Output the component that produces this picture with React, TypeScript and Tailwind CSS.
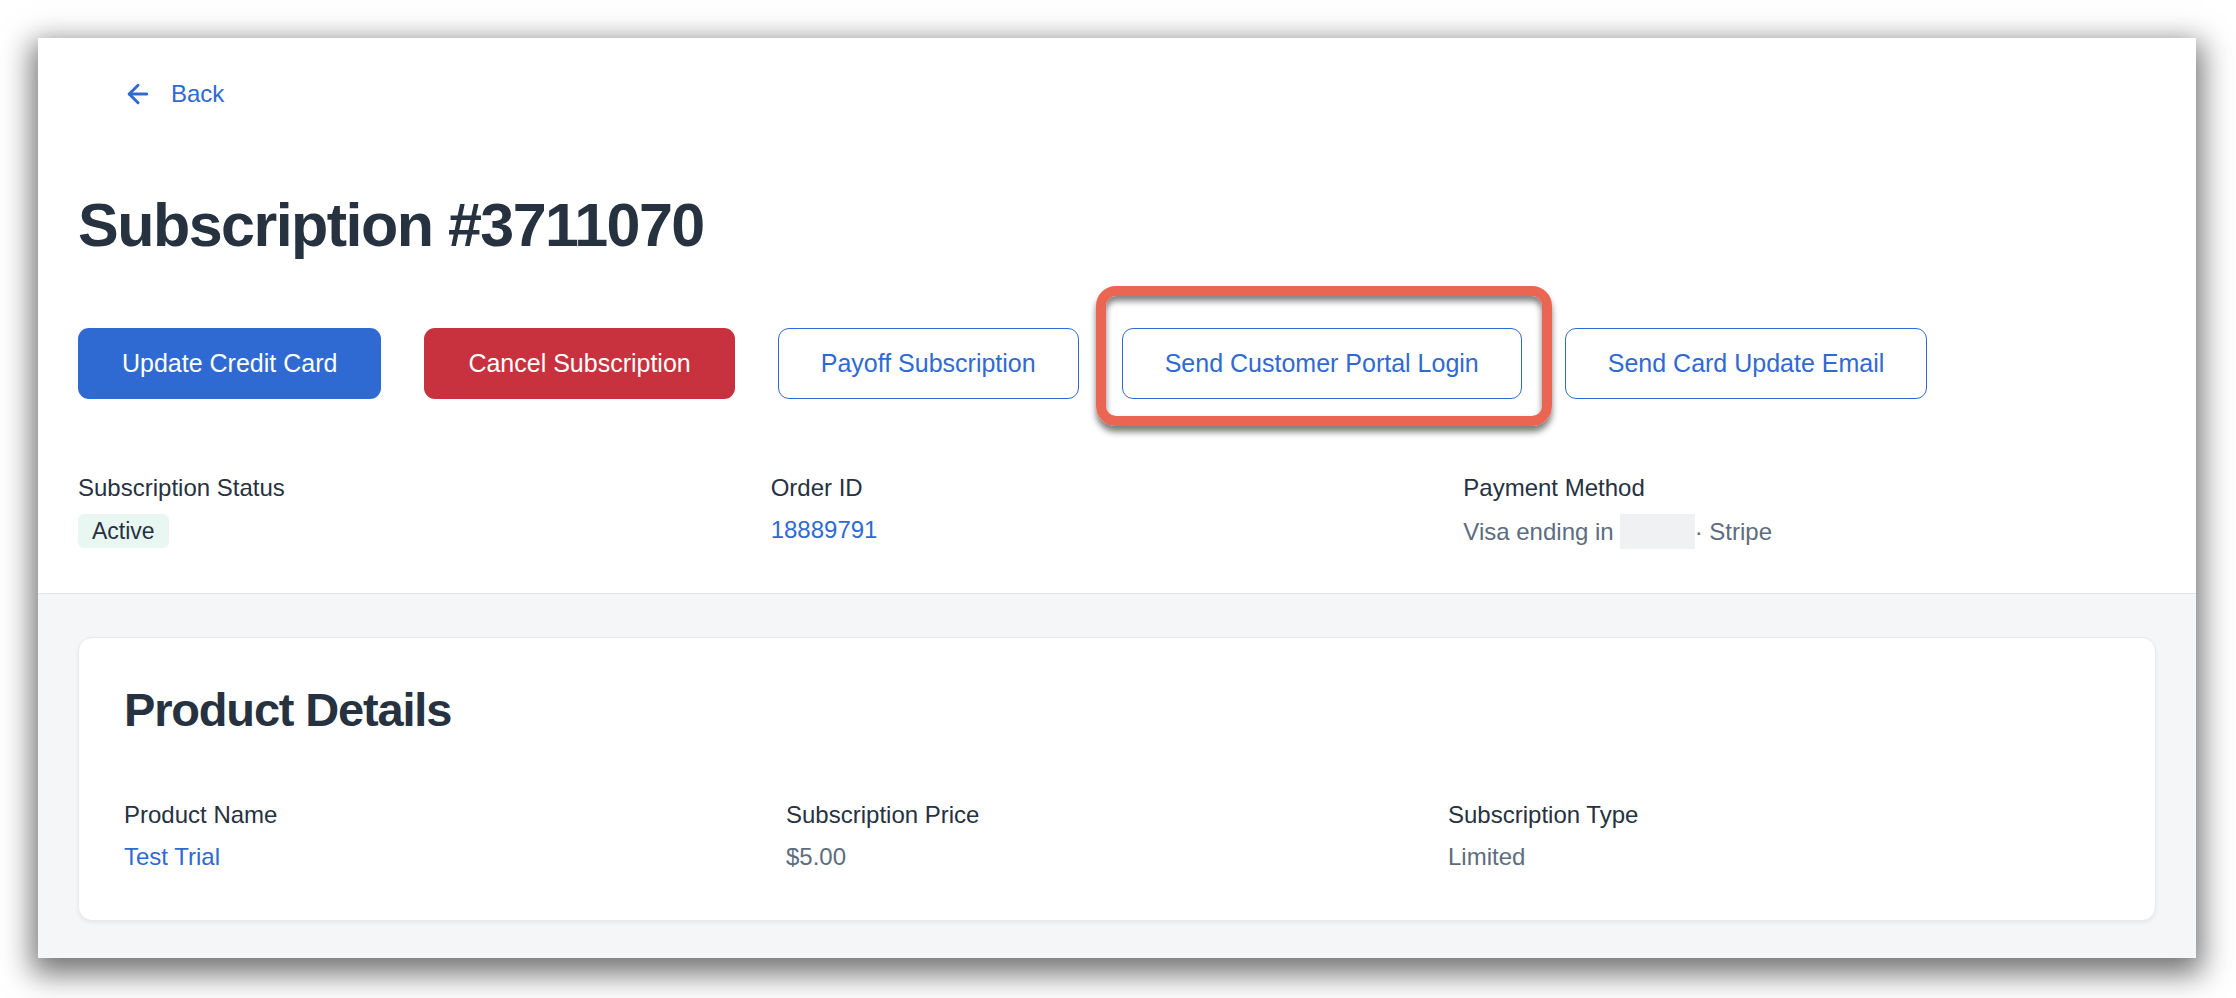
import { ArrowLeft } from "lucide-react";

const font = { fontFamily: '"Liberation Sans", Arial, sans-serif' };

function Field({ label, children }: { label: string; children: React.ReactNode }) {
	return (
		<div className="flex flex-col">
			<p className="text-[24px] leading-[32px] text-[#27313f]">{label}</p>
			<div className="mt-[10px] text-[24px] leading-[32px]">{children}</div>
		</div>
	);
}

export default function App() {
	return (
		<div className="w-[2236px] h-[998px] bg-white pl-[38px] pt-[38px]" style={font}>
			<div className="w-[2158px] h-[920px] bg-white flex flex-col shadow-[0_10px_28px_6px_rgba(0,0,0,0.55)]">
				<section className="px-[40px] pt-[40px] pb-[44px] border-b border-[#e2e5e9]">
					<a className="ml-[45px] flex items-center gap-[18px] text-[#2f6ad2] text-[24px] leading-[32px]">
						<ArrowLeft className="w-[30px] h-[30px]" strokeWidth={2.4} />
						<span>Back</span>
					</a>

					<h1 className="mt-[79px] text-[61px] leading-[72px] font-bold tracking-tight text-[#26323f]">
						Subscription #3711070
					</h1>

					<div className="mt-[67px] flex items-center gap-[43px]">
						<button className="h-[71px] px-[44px] rounded-[11px] bg-[#2f6ad2] text-white text-[25px]">
							Update Credit Card
						</button>
						<button className="h-[71px] px-[44px] rounded-[11px] bg-[#c8313e] text-white text-[25px]">
							Cancel Subscription
						</button>
						<button className="h-[71px] px-[42px] rounded-[11px] border border-[#2f6ad2] bg-white text-[#2f6ad2] text-[25px]">
							Payoff Subscription
						</button>
						<div className="relative">
							<button className="h-[71px] px-[42px] rounded-[11px] border border-[#2f6ad2] bg-white text-[#2f6ad2] text-[25px]">
								Send Customer Portal Login
							</button>
							<div className="absolute -left-[26px] -right-[30px] -top-[42px] -bottom-[27px] rounded-[20px] border-[10px] border-[#eb6553] shadow-[0_6px_6px_rgba(0,0,0,0.5),inset_0_5px_6px_rgba(0,0,0,0.5)] pointer-events-none" />
						</div>
						<button className="h-[71px] px-[42px] rounded-[11px] border border-[#2f6ad2] bg-white text-[#2f6ad2] text-[25px]">
							Send Card Update Email
						</button>
					</div>

					<div className="mt-[73px] grid grid-cols-3">
						<Field label="Subscription Status">
							<span className="inline-flex items-center h-[34px] px-[14px] rounded-[6px] bg-[#e9f7f2] text-[23px] text-[#27313f]">
								Active
							</span>
						</Field>
						<Field label="Order ID">
							<span className="text-[#2f6ad2]">18889791</span>
						</Field>
						<Field label="Payment Method">
							<span className="flex items-center text-[#5d6c7e]">
								Visa ending in
								<span className="ml-[6px] inline-block w-[75px] h-[35px] bg-[#f0f1f3]" />
								<span>·&nbsp;Stripe</span>
							</span>
						</Field>
					</div>
				</section>

				<section className="flex-1 bg-[#f5f6f8] px-[40px] pt-[43px]">
					<div className="bg-white rounded-[14px] border border-[#e8eaed] shadow-[0_2px_4px_rgba(0,0,0,0.06)] px-[45px] pt-[44px] pb-[47px]">
						<h2 className="text-[47px] leading-[56px] font-bold tracking-tight text-[#26323f]">
							Product Details
						</h2>
						<div className="mt-[61px] grid grid-cols-3">
							<Field label="Product Name">
								<span className="text-[#2f6ad2]">Test Trial</span>
							</Field>
							<Field label="Subscription Price">
								<span className="text-[#5d6c7e]">$5.00</span>
							</Field>
							<Field label="Subscription Type">
								<span className="text-[#5d6c7e]">Limited</span>
							</Field>
						</div>
					</div>
				</section>
			</div>
		</div>
	);
}
